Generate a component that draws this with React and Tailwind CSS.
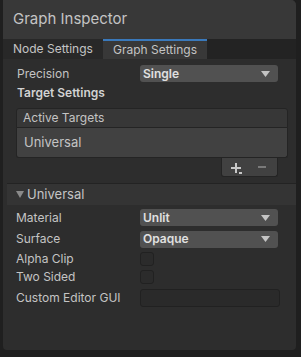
import React from "react";

const Dropdown = ({ value }) => (
  <div className="flex h-[17px] w-[138px] items-center justify-between rounded-[3px] bg-[#515151] pl-[3px] pr-[8px] text-[12px] font-semibold text-[#e0e0e0]">
    <span>{value}</span>
    <svg width="9" height="6" viewBox="0 0 9 6">
      <path d="M0 0h9L4.5 6z" fill="#c4c4c4" />
    </svg>
  </div>
);

const Row = ({ label, children, h = "h-[21px]" }) => (
  <div className={`flex ${h} items-center`}>
    <div className="w-[123px] shrink-0">{label}</div>
    {children}
  </div>
);

const Toggle = () => (
  <div className="h-[14px] w-[14px] rounded-[3px] border border-[#212121] bg-[#2b2b2b]" />
);

export default function App() {
  return (
    <div
      className="h-[357px] w-[301px] bg-[#1f1f1f] pl-[3px] pr-[5px] pb-[7px]"
      style={{ fontFamily: "Inter, 'Noto Sans', sans-serif" }}
    >
      <div className="flex h-full flex-col overflow-hidden rounded-b-[4px] rounded-tr-[5px] bg-[#2d2d2d] text-[12px] text-[#c4c4c4]">
        {/* header */}
        <div className="flex h-[39px] items-center bg-[#383838] pl-[10px] text-[15px] text-[#c4c4c4]">
          Graph Inspector
        </div>

        {/* tabs */}
        <div className="flex h-[20px] bg-[#232323]">
          <div className="flex w-[100px] items-center bg-[#282828] pl-[10px]">Node Settings</div>
          <div className="flex w-[104px] items-center border-t-2 border-[#3a79bb] bg-[#383838] pl-[10px]">
            Graph Settings
          </div>
        </div>

        {/* graph settings */}
        <div className="px-[14px] pt-[5px]">
          <Row label="Precision" h="h-[19px]">
            <Dropdown value="Single" />
          </Row>
          <div className="flex h-[20px] items-center font-semibold text-[#d2d2d2]">Target Settings</div>

          <div className="mt-[5px] ml-[-1px] mr-[-6px]">
            <div className="flex h-[20px] items-center rounded-t-[3px] border border-[#242424] bg-[#373737] pl-[6px]">
              Active Targets
            </div>
            <div className="flex h-[30px] items-center rounded-b-[3px] border border-t-0 border-[#242424] bg-[#414141] pl-[7px] text-[13px]">
              Universal
            </div>
            <div className="flex justify-end">
              <div className="mr-[10px] flex h-[19px] w-[57px] items-center rounded-b-[3px] border border-t-0 border-[#242424] bg-[#414141]">
                <svg width="12" height="12" viewBox="0 0 12 12" className="ml-[9px] mt-[3px]">
                  <path d="M4 0h2v4h4v2H6v4H4V6H0V4h4z" fill="#c8c8c8" />
                  <path d="M8 9h3v2H8z" fill="#c8c8c8" />
                </svg>
                <div className="ml-[15px] h-[2px] w-[8px] bg-[#7a7a7a]" />
              </div>
            </div>
          </div>
        </div>

        {/* universal foldout */}
        <div className="mt-[6px] ml-[4px] flex h-[22px] items-center border-t border-[#232323] bg-[#343434] pl-[9px] text-[13px]">
          <svg width="8" height="7" viewBox="0 0 8 7" className="mr-[3px]">
            <path d="M0 0h8L4 7z" fill="#8a8a8a" />
          </svg>
          Universal
        </div>

        <div className="px-[13px] pt-[2px]">
          <Row label="Material">
            <div className="ml-[1px]"><Dropdown value="Unlit" /></div>
          </Row>
          <Row label="Surface" h="h-[22px]">
            <div className="ml-[1px]"><Dropdown value="Opaque" /></div>
          </Row>
          <Row label="Alpha Clip" h="h-[18px]">
            <div className="ml-[1px]"><Toggle /></div>
          </Row>
          <Row label="Two Sided" h="h-[18px]">
            <div className="ml-[1px]"><Toggle /></div>
          </Row>
          <Row label="Custom Editor GUI" h="h-[24px]">
            <div className="ml-[1px] h-[18px] w-[140px] rounded-[3px] border border-[#212121] bg-[#2a2a2a]" />
          </Row>
        </div>
      </div>
    </div>
  );
}
